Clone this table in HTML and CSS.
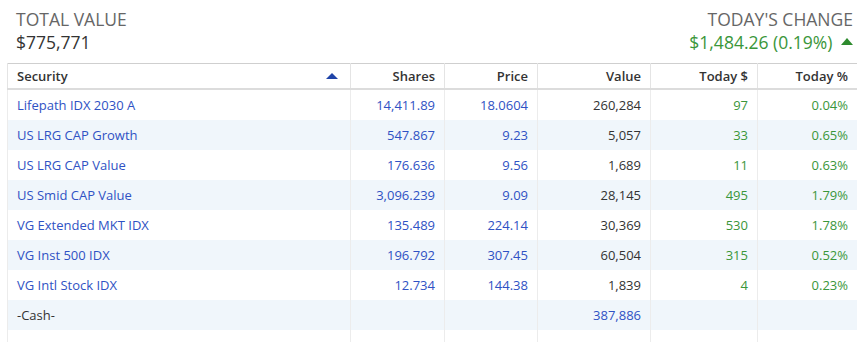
FILE: index.html
```html
<!DOCTYPE html>
<html lang="en">
<head>
  <meta charset="UTF-8">
  <title>Holdings</title>
  <link rel="stylesheet" href="styles.css">
</head>
<body>
  <div class="summary">
    <div class="total">
      <div class="label">TOTAL VALUE</div>
      <div class="amount">$775,771</div>
    </div>
    <div class="change">
      <div class="label">TODAY'S CHANGE</div>
      <div class="amount up">$1,484.26 (0.19%) <span class="arrow"></span></div>
    </div>
  </div>

  <div class="grid-wrap">
    <table class="holdings">
      <thead>
        <tr>
          <th class="security">Security <span class="sort"></span></th>
          <th class="shares">Shares</th>
          <th class="price">Price</th>
          <th class="value">Value</th>
          <th class="today-d">Today $</th>
          <th class="today-p">Today %</th>
        </tr>
      </thead>
      <tbody>
        <tr><td class="link">Lifepath IDX 2030 A</td><td class="link">14,411.89</td><td class="link">18.0604</td><td>260,284</td><td class="up">97</td><td class="up">0.04%</td></tr>
        <tr><td class="link">US LRG CAP Growth</td><td class="link">547.867</td><td class="link">9.23</td><td>5,057</td><td class="up">33</td><td class="up">0.65%</td></tr>
        <tr><td class="link">US LRG CAP Value</td><td class="link">176.636</td><td class="link">9.56</td><td>1,689</td><td class="up">11</td><td class="up">0.63%</td></tr>
        <tr><td class="link">US Smid CAP Value</td><td class="link">3,096.239</td><td class="link">9.09</td><td>28,145</td><td class="up">495</td><td class="up">1.79%</td></tr>
        <tr><td class="link">VG Extended MKT IDX</td><td class="link">135.489</td><td class="link">224.14</td><td>30,369</td><td class="up">530</td><td class="up">1.78%</td></tr>
        <tr><td class="link">VG Inst 500 IDX</td><td class="link">196.792</td><td class="link">307.45</td><td>60,504</td><td class="up">315</td><td class="up">0.52%</td></tr>
        <tr><td class="link">VG Intl Stock IDX</td><td class="link">12.734</td><td class="link">144.38</td><td>1,839</td><td class="up">4</td><td class="up">0.23%</td></tr>
        <tr><td>-Cash-</td><td></td><td></td><td class="link">387,886</td><td></td><td></td></tr>
        <tr class="filler"><td></td><td></td><td></td><td></td><td></td><td></td></tr>
      </tbody>
    </table>
  </div>
</body>
</html>
```
FILE: styles.css
```css
body {
  margin: 0;
  padding: 8px 4px 0 7px;
  font-family: 'Open Sans', 'Noto Sans', sans-serif;
  color: #333;
  background: #fff;
  overflow: hidden;
}

.summary {
  display: flex;
  justify-content: space-between;
  padding: 0 4px 0 9px;
  height: 55px;
}

.summary .label {
  font-size: 17.5px;
  line-height: 22px;
  color: #666;
}

.summary .amount {
  font-size: 17.5px;
  line-height: 24px;
  color: #333;
}

.change {
  text-align: right;
}

.summary .amount.up {
  color: #3a963a;
}

.arrow {
  display: inline-block;
  width: 0;
  height: 0;
  margin-left: 4px;
  border-left: 6px solid transparent;
  border-right: 6px solid transparent;
  border-bottom: 7px solid #2e8b2e;
  vertical-align: 4px;
}

.grid-wrap {
  height: 279px;
  overflow: hidden;
}

.holdings {
  width: 851px;
  border-collapse: collapse;
  border: 1px solid #cfcfcf;
  font-size: 13px;
  table-layout: fixed;
}

.holdings th {
  height: 24px;
  padding: 0 9px;
  font-weight: 600;
  color: #333;
  text-align: right;
  border-left: 1px solid #e4e4e4;
  border-bottom: 2px solid #dcdcdc;
  background: #fff;
}

.holdings th.security {
  text-align: left;
  width: 324px;
  position: relative;
}

.holdings th.shares { width: 75px; }
.holdings th.price { width: 74px; }
.holdings th.value { width: 94px; }
.holdings th.today-d { width: 88px; }

.sort {
  position: absolute;
  right: 12px;
  top: 9px;
  border-left: 6px solid transparent;
  border-right: 6px solid transparent;
  border-bottom: 6px solid #1f44a8;
}

.holdings td {
  height: 30px;
  padding: 0 9px;
  text-align: right;
  border-left: 1px solid #ececec;
  white-space: nowrap;
}

.holdings td:first-child {
  text-align: left;
}

.holdings tbody tr:nth-child(even) td {
  background: #f0f6fb;
}

.holdings td.link {
  color: #2f52c4;
}

.holdings td.up {
  color: #3a963a;
}
```
